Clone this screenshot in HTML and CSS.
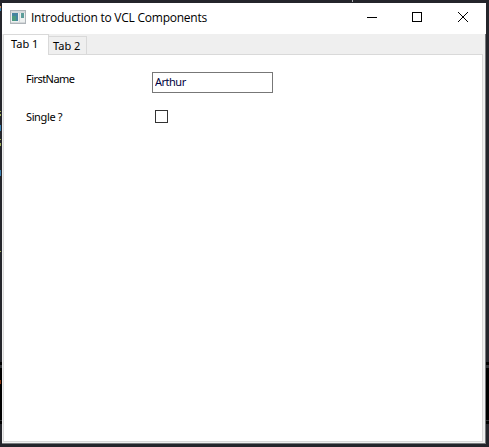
FILE: index.html
```html
<!DOCTYPE html>
<html lang="en">
<head>
<meta charset="utf-8">
<title>Introduction to VCL Components</title>
<link rel="stylesheet" href="styles.css">
</head>
<body>
<svg class="backdrop" width="489" height="447" shape-rendering="crispEdges" aria-hidden="true">
  <path fill="#000" d="M0 362h2v62H0zM486 362h3v62h-3z"/>
  <path fill="#303236" d="M0 365h2v3H0zM486 365h3v3h-3zM0 420h2v1H0zM486 420h3v1h-3z"/>
  <path fill="#a9a9ac" d="M352 0h1v2h-1z"/>
  <path fill="#bd895d" d="M0 6h1v2H0z"/>
  <path fill="#397fb0" d="M0 8h1v3H0zM0 125h1v6H0zM0 170h1v6H0z"/>
  <path fill="#9dac55" d="M0 111h1v1H0zM0 114h1v2H0zM0 139h1v1H0zM0 143h1v3H0zM0 251h1v1H0z"/>
  <path fill="#8b3511" d="M0 380h1v4H0z"/>
</svg>
<main class="window">
  <header class="titlebar">
    <svg class="app-icon" width="16" height="14" viewBox="0 0 16 14" shape-rendering="crispEdges">
      <path fill="#aeb4b9" d="M0 0h16v14H0z"/>
      <path fill="#d5d9dc" d="M1 1h14v2H1z"/>
      <path fill="#edf0f0" d="M1 3h14v9H1z"/>
      <path fill="#4584a0" d="M2 3h6v8H2z"/>
      <path fill="#4b9a80" d="M2 6h4v5H2z"/>
      <path fill="#5c9d9a" d="M11 3h3v5h-3z"/>
      <path fill="#d4d8da" d="M9 3h1v9H9zM1 12h14v1H1z"/>
    </svg>
    <h1><span>Introduction to VCL Components</span></h1>
    <svg class="controls" width="103" height="12" viewBox="0 0 103 12" fill="none" stroke="#000">
      <path d="M0 6.5h10M45.5 1.5h9v9h-9z" shape-rendering="crispEdges"/>
      <path d="M91 1l10 10M101 1L91 11"/>
    </svg>
  </header>
  <nav class="tabs">
    <div class="tab active">Tab 1</div>
    <div class="tab">Tab 2</div>
  </nav>
  <section class="page">
    <div class="row"><label class="name" for="first">FirstName</label><input id="first" class="edit" type="text" value="Arthur"></div>
    <div class="row single"><label class="question" for="single">Single ?</label><input id="single" class="check" type="checkbox"></div>
  </section>
</main>
</body>
</html>
```
FILE: styles.css
```css
* { box-sizing: border-box; }
body {
  margin: 0;
  width: 489px;
  height: 447px;
  overflow: hidden;
  padding: 3px 3px 4px 2px;
  background: #24252b;
  color: #000;
  font: 11px/14px "Noto Sans", sans-serif;
}
.backdrop { position: absolute; left: 0; top: 0; }
.window {
  position: relative;
  display: flex;
  flex-direction: column;
  width: 484px;
  height: 441px;
  background: #efefef;
  border-right: 1px solid #777a7c;
  border-bottom: 1px solid #777a7c;
}
.titlebar {
  display: flex;
  align-items: center;
  width: 484px;
  height: 31px;
  padding-left: 8px;
  background: #fff;
  flex: none;
}
.app-icon { margin-top: -3px; }
h1 {
  margin: -2px 0 0 5px;
  width: 336px;
  font: 12px/16px "Open Sans", "Noto Sans", sans-serif;
  letter-spacing: -0.24px;
  white-space: nowrap;
}
.controls { flex: none; margin-top: -3px; }
.tabs {
  display: flex;
  align-items: flex-end;
  height: 20px;
  flex: none;
  padding-left: 1px;
}
.tab {
  width: 38px;
  height: 18px;
  padding: 2px 0 0 4px;
  border: 1px solid #d9d9d9;
  border-width: 1px 1px 0 0;
  white-space: nowrap;
}
.tab.active {
  position: relative;
  width: 46px;
  height: 21px;
  margin-bottom: -1px;
  padding: 2px 0 0 7px;
  border-left-width: 1px;
  background: #fff;
}
.page {
  width: 480px;
  height: 388px;
  margin-left: 1px;
  padding: 17px 0 0 22px;
  background: #fff;
  border: 1px solid #d9d9d9;
}
.row { display: flex; }
.row label { width: 126px; }
.name { letter-spacing: -0.55px; }
.question { letter-spacing: -0.38px; }
.single { margin-top: 17px; }
.edit {
  width: 121px;
  height: 21px;
  padding: 0 2px 2px;
  border: 1px solid #777;
  border-radius: 0;
  outline: 0;
  background: #fff;
  color: #000040;
  font: inherit;
  letter-spacing: -0.5px;
}
.check {
  appearance: none;
  width: 13px;
  height: 13px;
  margin: 0 0 0 3px;
  border: 1px solid #333;
  background: #fff;
}
```
